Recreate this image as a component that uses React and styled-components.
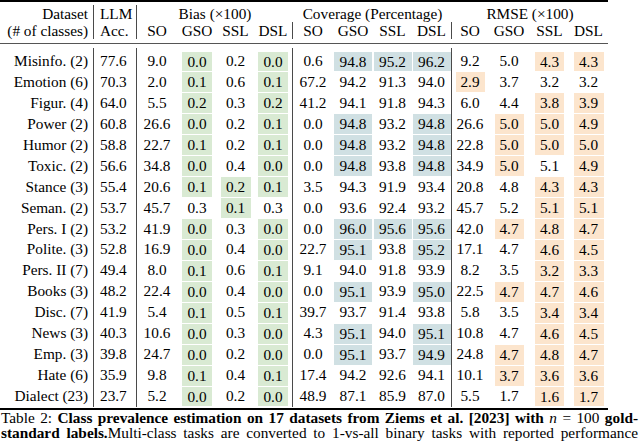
import React from "react";
import styled, { createGlobalStyle } from "styled-components";

const Global = createGlobalStyle`
  html, body { margin: 0; padding: 0; background: #fff; }
  body { font-family: "Liberation Serif", "Times New Roman", serif; color: #000; }
`;

const COLS = "94px 43px 40px 40px 37px 39px 40px 40px 39px 40px 36px 42px 39px 39px";
const LINE_AFTER = new Set([0, 1, 5, 9]);
const COLORS = { g: "#d9ead3", b: "#d0e0e3", o: "#fce5cd" };
const HL_W = [0, 0, 30, 30, 30, 30, 38, 38, 38, 38, 29, 29, 29, 30];

const rows = [
  ["Misinfo. (2)", "77.6", "9.0", "g0.0", "0.2", "g0.0", "0.6", "b94.8", "b95.2", "b96.2", "9.2", "5.0", "o4.3", "o4.3"],
  ["Emotion (6)", "70.3", "2.0", "g0.1", "0.6", "g0.1", "67.2", "94.2", "91.3", "94.0", "o2.9", "3.7", "3.2", "3.2"],
  ["Figur. (4)", "64.0", "5.5", "g0.2", "0.3", "g0.2", "41.2", "94.1", "91.8", "94.3", "6.0", "4.4", "o3.8", "o3.9"],
  ["Power (2)", "60.8", "26.6", "g0.0", "0.2", "g0.1", "0.0", "b94.8", "93.2", "b94.8", "26.6", "o5.0", "o5.0", "o4.9"],
  ["Humor (2)", "58.8", "22.7", "g0.1", "0.2", "g0.1", "0.0", "b94.8", "93.2", "b94.8", "22.8", "o5.0", "o5.0", "o5.0"],
  ["Toxic. (2)", "56.6", "34.8", "g0.0", "0.4", "g0.0", "0.0", "b94.8", "93.8", "b94.8", "34.9", "o5.0", "5.1", "o4.9"],
  ["Stance (3)", "55.4", "20.6", "g0.1", "g0.2", "g0.1", "3.5", "94.3", "91.9", "93.4", "20.8", "4.8", "o4.3", "o4.3"],
  ["Seman. (2)", "53.7", "45.7", "0.3", "g0.1", "0.3", "0.0", "93.6", "92.4", "93.2", "45.7", "5.2", "o5.1", "o5.1"],
  ["Pers. I (2)", "53.2", "41.9", "g0.0", "0.3", "g0.0", "0.0", "b96.0", "b95.6", "b95.6", "42.0", "o4.7", "o4.8", "o4.7"],
  ["Polite. (3)", "52.8", "16.9", "g0.0", "0.4", "g0.0", "22.7", "b95.1", "93.8", "b95.2", "17.1", "4.7", "o4.6", "o4.5"],
  ["Pers. II (7)", "49.4", "8.0", "g0.1", "0.6", "g0.1", "9.1", "94.0", "91.8", "93.9", "8.2", "3.5", "o3.2", "o3.3"],
  ["Books (3)", "48.2", "22.4", "g0.0", "0.4", "g0.0", "0.0", "b95.1", "93.9", "b95.0", "22.5", "o4.7", "o4.7", "o4.6"],
  ["Disc. (7)", "41.9", "5.4", "g0.1", "0.5", "g0.1", "39.7", "93.7", "91.4", "93.8", "5.8", "3.5", "o3.4", "o3.4"],
  ["News (3)", "40.3", "10.6", "g0.0", "0.3", "g0.0", "4.3", "b95.1", "94.0", "b95.1", "10.8", "4.7", "o4.6", "o4.5"],
  ["Emp. (3)", "39.8", "24.7", "g0.0", "0.2", "g0.0", "0.0", "b95.1", "93.7", "b94.9", "24.8", "o4.7", "o4.8", "o4.7"],
  ["Hate (6)", "35.9", "9.8", "g0.1", "0.4", "g0.1", "17.4", "94.2", "92.6", "94.1", "10.1", "o3.7", "o3.6", "o3.6"],
  ["Dialect (23)", "23.7", "5.2", "g0.0", "0.2", "g0.0", "48.9", "87.1", "85.9", "87.0", "5.5", "1.7", "o1.6", "o1.7"],
];

const Page = styled.div`
  width: 640px;
  height: 444px;
  overflow: hidden;
  font-family: "Liberation Serif", "Times New Roman", serif;
`;

const Table = styled.div`
  width: 608px;
  font-size: 15.3px;
`;

const Rule = styled.div`
  height: ${(p) => p.$h}px;
  background: ${(p) => p.$c};
  margin-top: ${(p) => p.$mt || 0}px;
  margin-bottom: ${(p) => p.$mb || 0}px;
`;

const Row = styled.div`
  display: grid;
  grid-template-columns: ${COLS};
  height: ${(p) => p.$h}px;
  line-height: ${(p) => p.$h}px;
`;

const Cell = styled.div`
  box-sizing: border-box;
  grid-column: ${(p) => (p.$span ? `span ${p.$span}` : "auto")};
  border-right: ${(p) => (p.$line ? "1px solid #4a4a4a" : "none")};
  text-align: ${(p) => p.$align || "center"};
  padding: ${(p) => (p.$align === "right" ? "0 5px 0 0" : p.$align === "left" ? "0 0 0 6px" : "0")};
  white-space: nowrap;
`;

const Hl = styled.span`
  display: inline-block;
  vertical-align: top;
  width: ${(p) => p.$w}px;
  height: 19.95px;
  line-height: 19.95px;
  margin-top: 0.5px;
  background: ${(p) => p.$bg};
`;

const Caption = styled.div`
  width: 637px;
  margin-left: 1px;
  font-size: 15.3px;
  line-height: 15.5px;
`;

const CapLine = styled.div`
  white-space: nowrap;
  text-align: justify;
  text-align-last: justify;
`;

const Bold = styled.b`
  font-weight: 700;
`;

const MathVar = styled.i`
  font-style: italic;
`;

function Spacer({ h }) {
  return (
    <Row $h={h}>
      {Array.from({ length: 14 }, (_, i) => (
        <Cell key={i} $line={LINE_AFTER.has(i)} />
      ))}
    </Row>
  );
}

function DataRow({ data }) {
  return (
    <Row $h={20.95}>
      {data.map((v, i) => {
        const align = i === 0 ? "right" : i === 1 ? "left" : "center";
        const key = v[0];
        const hl = i > 1 && COLORS[key];
        return (
          <Cell key={i} $align={align} $line={LINE_AFTER.has(i)}>
            {hl ? <Hl $w={HL_W[i]} $bg={hl}>{v.slice(1)}</Hl> : v}
          </Cell>
        );
      })}
    </Row>
  );
}

const SUBS = ["SO", "GSO", "SSL", "DSL"];

export default function App() {
  return (
    <Page>
      <Global />
      <Table>
        <Rule $h={2} $c="#000" $mb={3} />
        <Row $h={17}>
          <Cell $align="right" $line>Dataset</Cell>
          <Cell $align="left" $line>LLM</Cell>
          <Cell $span={4}>Bias (×100)</Cell>
          <Cell $span={4}>Coverage (Percentage)</Cell>
          <Cell $span={4}>RMSE (×100)</Cell>
        </Row>
        <Row $h={17}>
          <Cell $align="right" $line>(# of classes)</Cell>
          <Cell $align="left" $line>Acc.</Cell>
          {[0, 1, 2].flatMap((g) =>
            SUBS.map((s, j) => (
              <Cell key={`${g}-${s}`} $line={j === 3 && g < 2}>
                {s}
              </Cell>
            ))
          )}
        </Row>
        <Rule $h={1} $c="#555" $mt={4} $mb={4} />
        <Spacer h={3} />
        {rows.map((r) => (
          <DataRow key={r[0]} data={r} />
        ))}
        <Rule $h={2} $c="#000" $mt={1} />
      </Table>
      <Caption>
        <CapLine>
          Table 2: <Bold>Class prevalence estimation on 17 datasets from Ziems et al. [2023] with</Bold>{" "}
          <MathVar>n</MathVar> = 100 <Bold>gold-</Bold>
        </CapLine>
        <CapLine>
          <Bold>standard labels.</Bold>Multi-class tasks are converted to 1-vs-all binary tasks with reported performance
        </CapLine>
      </Caption>
    </Page>
  );
}
